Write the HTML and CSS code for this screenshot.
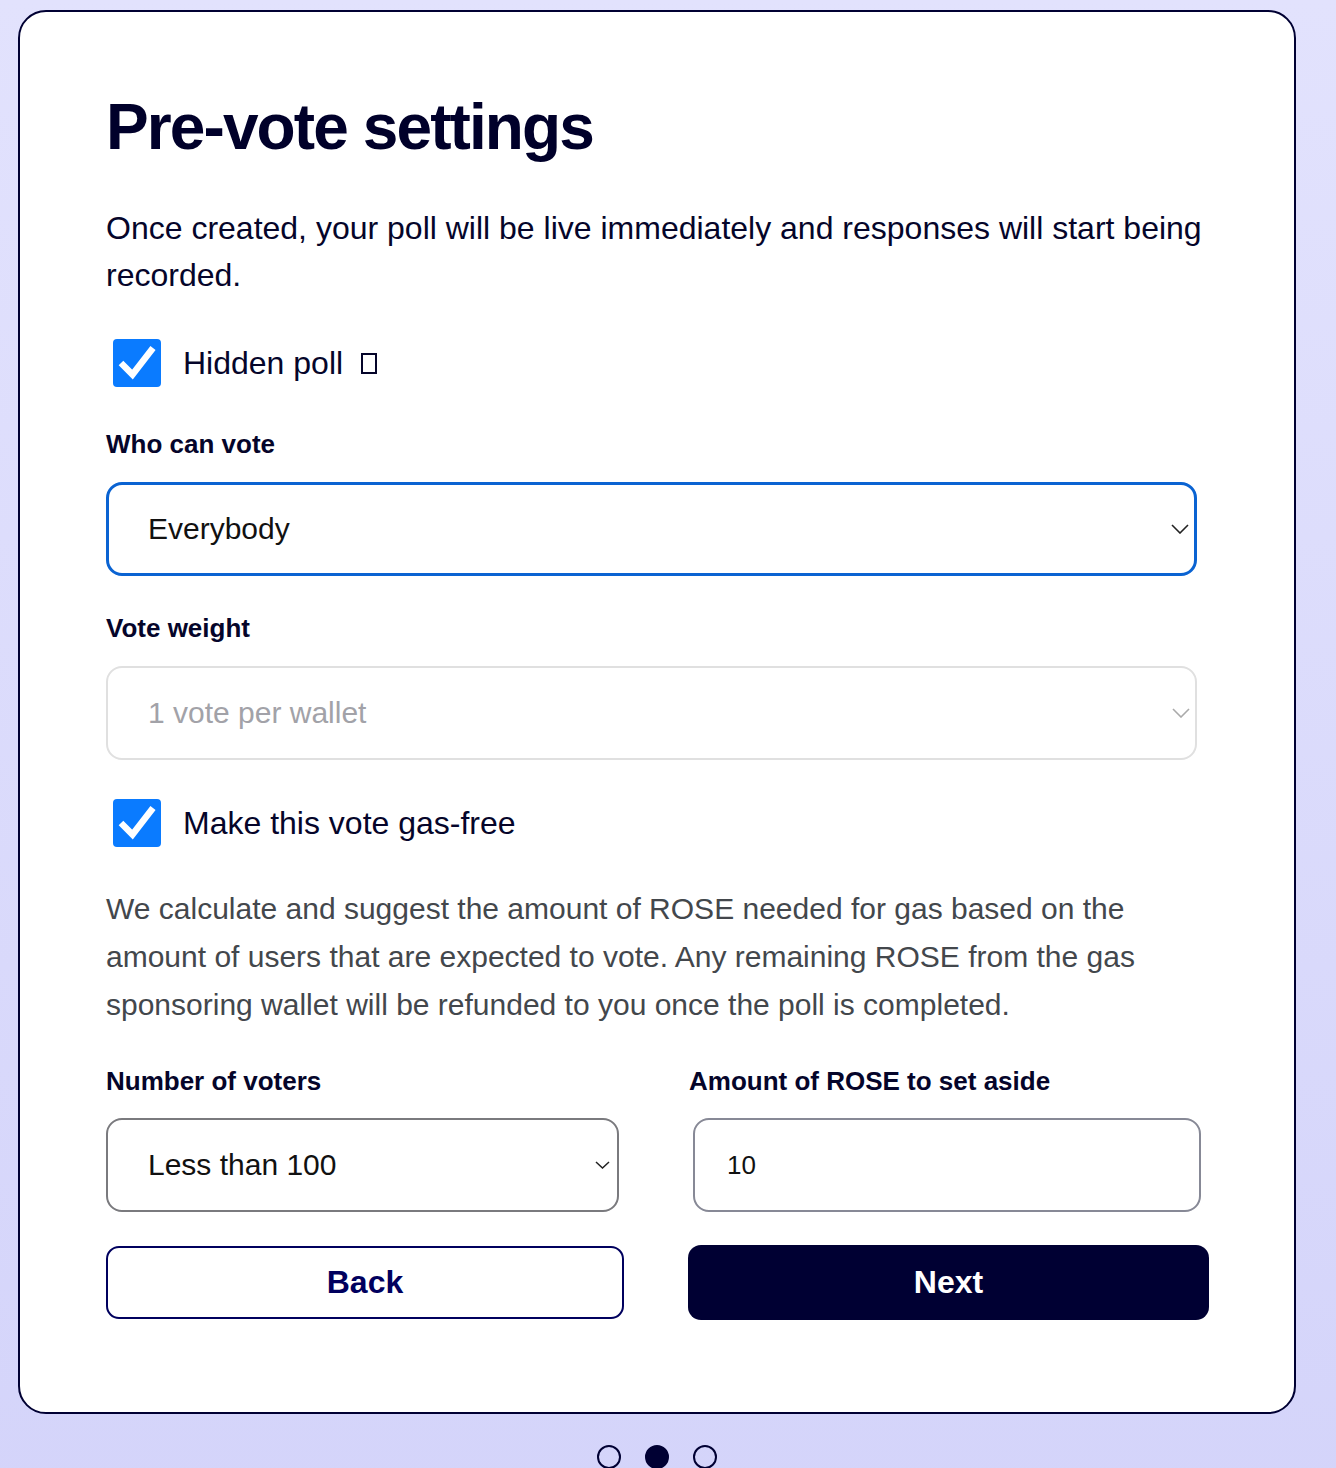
FILE: index.html
```html
<!DOCTYPE html>
<html lang="en">
<head>
<meta charset="utf-8">
<title>Pre-vote settings</title>
<link rel="stylesheet" href="styles.css">
</head>
<body>
<div class="page">
  <main class="card">
    <h1 class="title">Pre-vote settings</h1>
    <p class="lead">Once created, your poll will be live immediately and responses will start being recorded.</p>

    <label class="check-row">
      <span class="checkbox">
        <svg viewBox="0 0 48 48" width="48" height="48"><path d="M8 24 L19.5 35.5 L40 9" fill="none" stroke="#fff" stroke-width="6.5" stroke-linejoin="miter"/></svg>
      </span>
      <span class="check-text">Hidden poll</span>
      <span class="tofu"></span>
    </label>

    <div class="field">
      <div class="field-label">Who can vote</div>
      <div class="select select-focus">
        <span class="select-value">Everybody</span>
        <svg class="chevron" viewBox="0 0 18 10" width="18" height="10"><path d="M1 1 L9 9 L17 1" fill="none" stroke="#222" stroke-width="1.6"/></svg>
      </div>
    </div>

    <div class="field">
      <div class="field-label">Vote weight</div>
      <div class="select select-disabled">
        <span class="select-value">1 vote per wallet</span>
        <svg class="chevron" viewBox="0 0 18 10" width="18" height="10"><path d="M1 1 L9 9 L17 1" fill="none" stroke="#aaa" stroke-width="1.6"/></svg>
      </div>
    </div>

    <label class="check-row check-row-2">
      <span class="checkbox">
        <svg viewBox="0 0 48 48" width="48" height="48"><path d="M8 24 L19.5 35.5 L40 9" fill="none" stroke="#fff" stroke-width="6.5" stroke-linejoin="miter"/></svg>
      </span>
      <span class="check-text">Make this vote gas-free</span>
    </label>

    <p class="note">We calculate and suggest the amount of ROSE needed for gas based on the amount of users that are expected to vote. Any remaining ROSE from the gas sponsoring wallet will be refunded to you once the poll is completed.</p>

    <div class="grid">
      <div class="field">
        <div class="field-label">Number of voters</div>
        <div class="select select-small">
          <span class="select-value">Less than 100</span>
          <svg class="chevron chevron-small" viewBox="0 0 15 8" width="15" height="8"><path d="M1 1 L7.5 7 L14 1" fill="none" stroke="#222" stroke-width="1.5"/></svg>
        </div>
      </div>
      <div class="field">
        <div class="field-label">Amount of ROSE to set aside</div>
        <div class="text-input">10</div>
      </div>
      <button class="btn btn-back" type="button">Back</button>
      <button class="btn btn-next" type="button">Next</button>
    </div>
  </main>

  <div class="dots">
    <span class="dot"></span>
    <span class="dot dot-active"></span>
    <span class="dot"></span>
  </div>
</div>
</body>
</html>
```

FILE: styles.css
```css
* { box-sizing: border-box; }

html, body {
  margin: 0;
  padding: 0;
}

body {
  font-family: "Liberation Sans", Arial, Helvetica, sans-serif;
  color: #05052a;
  background: linear-gradient(180deg, #e2e2fd 0%, #d4d4fa 100%);
  min-height: 1500px;
}

.page {
  padding: 10px 0 0 18px;
  width: 1296px;
}

.card {
  width: 1278px;
  background: #fff;
  border: 2px solid #000033;
  border-radius: 28px;
  padding: 83px 85px 92px 86px;
}

.title {
  margin: 0;
  font-size: 64px;
  line-height: 64px;
  font-weight: 700;
  letter-spacing: -1.9px;
  color: #00002a;
}

.lead {
  margin: 46px 0 0;
  font-size: 32px;
  line-height: 47px;
  color: #05052a;
}

.check-row {
  display: flex;
  align-items: center;
  margin-top: 40px;
  height: 48px;
  padding-left: 7px;
}

.check-row-2 {
  margin-top: 39px;
}

.checkbox {
  width: 48px;
  height: 48px;
  background: #0a7bff;
  border-radius: 4px;
  display: block;
  flex: none;
}

.checkbox svg { display: block; }

.check-text {
  margin-left: 22px;
  font-size: 32px;
  line-height: 38px;
  color: #05052a;
}

.tofu {
  display: inline-block;
  width: 16px;
  height: 21px;
  border: 2.5px solid #05052a;
  margin-left: 18px;
  margin-top: 1px;
}

.field {
  margin-top: 37px;
}

.check-row + .field { margin-top: 42px; }

.field-label {
  font-size: 26px;
  line-height: 30px;
  font-weight: 700;
  color: #05052a;
  margin-bottom: 23px;
}

.grid .field-label { margin-bottom: 22px; }

.select {
  position: relative;
  width: 1091px;
  height: 94px;
  border-radius: 16px;
  display: flex;
  align-items: center;
  padding-left: 42px;
  font-size: 30px;
  color: #111;
}

.select-focus {
  border: 3px solid #0a63d2;
  padding-left: 39px;
}

.select-disabled {
  border: 2px solid #e0e0e0;
  padding-left: 40px;
  color: #a2a2a8;
}

.select-small {
  width: 513px;
  border: 2px solid #7a7a7e;
  padding-left: 40px;
}

.chevron {
  position: absolute;
  right: 5px;
  top: 50%;
  margin-top: -5px;
  display: block;
}

.chevron-small {
  right: 7px;
  margin-top: -4px;
}

.note {
  margin: 38px 0 0;
  font-size: 30px;
  line-height: 48px;
  color: #43474c;
}

.grid {
  display: grid;
  grid-template-columns: 518px 520px;
  column-gap: 65px;
  row-gap: 33px;
}

.grid .field { margin-top: 37px; }

.text-input {
  margin-left: 4px;
  width: 508px;
  height: 94px;
  border: 2px solid #878996;
  border-radius: 16px;
  display: flex;
  align-items: center;
  padding-left: 32px;
  font-size: 26px;
  color: #111;
}

.btn {
  font-family: "Liberation Sans", Arial, Helvetica, sans-serif;
  font-size: 32px;
  font-weight: 700;
  border-radius: 13px;
  cursor: pointer;
}

.btn-back {
  height: 73px;
  margin-top: 1px;
  background: #fff;
  border: 2px solid #00005e;
  color: #00005e;
}

.btn-next {
  height: 75px;
  background: #000033;
  border: none;
  color: #fff;
  margin-left: -1px;
}

.dots {
  display: flex;
  justify-content: center;
  gap: 24px;
  width: 1278px;
  margin-top: 31px;
}

.dot {
  width: 24px;
  height: 24px;
  border-radius: 50%;
  border: 2px solid #000033;
  display: block;
}

.dot-active {
  background: #000033;
}
```
